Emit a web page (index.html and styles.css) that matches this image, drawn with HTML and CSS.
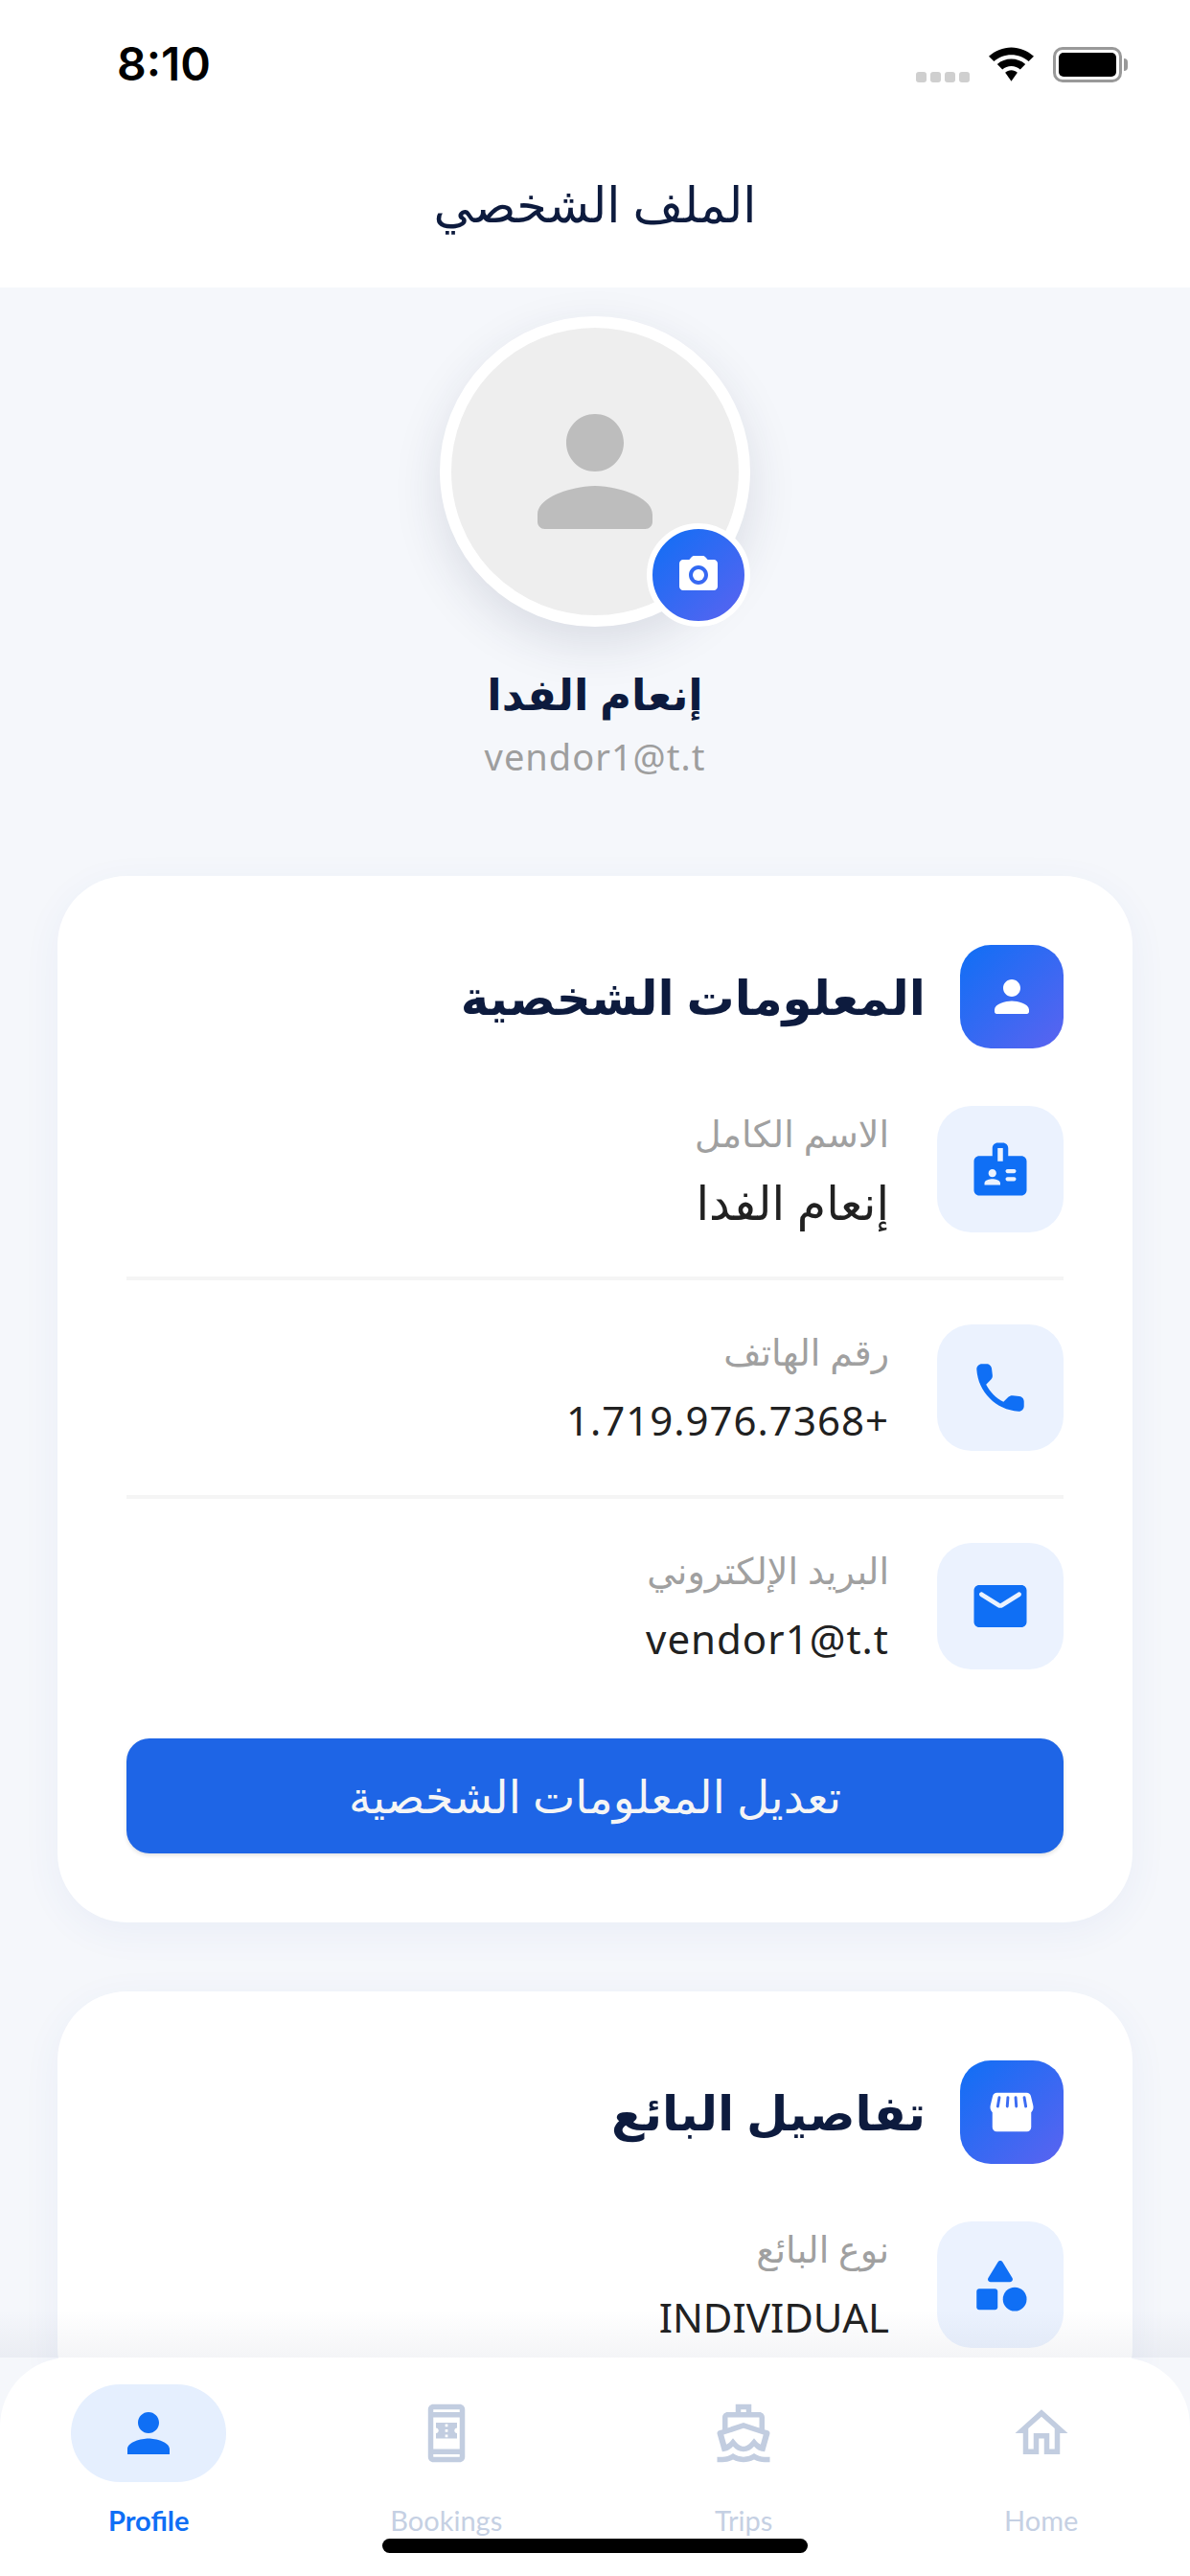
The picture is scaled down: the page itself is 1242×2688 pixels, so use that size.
FILE: index.html
```html
<!DOCTYPE html>
<html lang="ar" dir="rtl">
<head>
    <meta charset="UTF-8">
    <meta name="viewport" content="width=device-width, initial-scale=1.0">
    <title>الملف الشخصي</title>
    <link rel="stylesheet" href="styles.css">
</head>
<body>
<div class="screen">
    <!-- status bar -->
    <div class="status-bar" dir="ltr">
        <span class="clock">8:10</span>
        <div class="status-icons">
            <div class="signal"><i></i><i></i><i></i><i></i></div>
            <svg class="wifi" viewBox="0 0 48 36"><path d="M24 0C15 0 7 3.500 0 9.500L5.500 15C10.500 10.500 17 8 24 8s13.500 2.500 18.500 7L48 9.500C41 3.500 33 0 24 0z"/><path d="M24 12.500c-5.500 0-11 2-15 5.500l5.500 5.500c2.600-2.200 5.900-3.500 9.500-3.500s6.900 1.300 9.500 3.500L39 18c-4-3.500-9.500-5.500-15-5.500z"/><path d="M24 24.500c-2.500 0-4.800 .9-6.500 2.500L24 36l6.500-9c-1.700-1.600-4-2.500-6.500-2.500z"/></svg>
            <div class="battery"><div class="battery-fill"></div></div>
        </div>
    </div>

    <header class="top-bar">الملف الشخصي</header>

    <main class="content">
        <section class="profile">
            <div class="avatar">
                <svg class="avatar-person" viewBox="0 0 24 24"><path d="M12 12c2.210 0 4-1.790 4-4s-1.790-4-4-4-4 1.790-4 4 1.790 4 4 4zm0 2c-2.670 0-8 1.340-8 4v1c0 .55.45 1 1 1h14c.55 0 1-.45 1-1v-1c0-2.660-5.330-4-8-4z"/></svg>
                <div class="avatar-camera">
                    <svg viewBox="0 0 24 24"><circle cx="12" cy="12" r="3"/><path d="M20 4h-3.170l-1.240-1.350c-.37-.41-.91-.65-1.470-.65H9.880c-.56 0-1.100.24-1.480.65L7.170 4H4c-1.100 0-2 .9-2 2v12c0 1.100.9 2 2 2h16c1.100 0 2-.9 2-2V6c0-1.100-.9-2-2-2zm-8 13c-2.760 0-5-2.240-5-5s2.240-5 5-5 5 2.240 5 5-2.240 5-5 5z"/></svg>
                </div>
            </div>
            <h2 class="profile-name">إنعام الفدا</h2>
            <div class="profile-mail">vendor1@t.t</div>
        </section>

        <section class="card">
            <div class="card-head">
                <div class="badge">
                    <svg viewBox="0 0 24 24"><path d="M12 12c2.210 0 4-1.790 4-4s-1.790-4-4-4-4 1.790-4 4 1.790 4 4 4zm0 2c-2.670 0-8 1.340-8 4v1c0 .55.45 1 1 1h14c.55 0 1-.45 1-1v-1c0-2.660-5.330-4-8-4z"/></svg>
                </div>
                <h3 class="card-title">المعلومات الشخصية</h3>
            </div>
            <div class="row row-line">
                <div class="tile">
                    <svg viewBox="0 0 24 24"><path d="M20 7h-5V4c0-1.100-.9-2-2-2h-2c-1.100 0-2 .9-2 2v3H4c-1.100 0-2 .9-2 2v11c0 1.100.9 2 2 2h16c1.100 0 2-.9 2-2V9c0-1.100-.9-2-2-2zM9 12c.83 0 1.500.67 1.500 1.500S9.830 15 9 15s-1.500-.67-1.500-1.500S8.170 12 9 12zm3 6H6v-.75c0-1 2-1.500 3-1.500s3 .5 3 1.500V18zm1-9h-2V4h2v5zm4.250 7.500h-2.500c-.41 0-.75-.34-.75-.75s.34-.75.75-.75h2.500c.41 0 .75.34.75.75s-.34.75-.75.75zm0-3h-2.500c-.41 0-.75-.34-.75-.75s.34-.75.75-.75h2.500c.41 0 .75.34.75.75s-.34.75-.75.75z"/></svg>
                </div>
                <div class="row-text">
                    <div class="row-label">الاسم الكامل</div>
                    <div class="row-value row-value-ar">إنعام الفدا</div>
                </div>
            </div>
            <div class="row row-line">
                <div class="tile">
                    <svg viewBox="0 0 24 24"><path d="M19.230 15.260l-2.540-.29c-.61-.07-1.210.14-1.640.57l-1.840 1.840c-2.830-1.440-5.150-3.750-6.590-6.590l1.850-1.850c.43-.43.64-1.030.57-1.640l-.29-2.520c-.12-1.010-.97-1.770-1.990-1.770H5.030c-1.130 0-2.070.94-2 2.070.53 8.540 7.360 15.360 15.890 15.890 1.130.07 2.070-.87 2.070-2v-1.730c.01-1.010-.75-1.860-1.760-1.980z"/></svg>
                </div>
                <div class="row-text">
                    <div class="row-label">رقم الهاتف</div>
                    <div class="row-value">+1.719.976.7368</div>
                </div>
            </div>
            <div class="row">
                <div class="tile">
                    <svg viewBox="0 0 24 24"><path d="M20 4H4c-1.100 0-1.990.9-1.990 2L2 18c0 1.100.9 2 2 2h16c1.100 0 2-.9 2-2V6c0-1.100-.9-2-2-2zm-.4 4.250l-6.540 4.090c-.65.41-1.470.41-2.120 0L4.400 8.250c-.25-.16-.4-.43-.4-.72 0-.67.73-1.070 1.300-.72L12 11l6.700-4.190c.57-.35 1.300.05 1.300.72 0 .29-.15.56-.4.72z"/></svg>
                </div>
                <div class="row-text">
                    <div class="row-label">البريد الإلكتروني</div>
                    <div class="row-value"><bdi>vendor1@t.t</bdi></div>
                </div>
            </div>
            <button class="edit-btn">تعديل المعلومات الشخصية</button>
        </section>

        <section class="card">
            <div class="card-head">
                <div class="badge">
                    <svg viewBox="0 0 24 24"><path d="M5.050 3h13.890c.91 0 1.690.62 1.910 1.520l1.050 4.370c.25 1.020.02 2.070-.62 2.890-.08.1-.19.19-.28.28V19c0 1.100-.9 2-2 2H5c-1.100 0-2-.9-2-2v-6.940c-.09-.1-.2-.18-.28-.29-.64-.82-.86-1.860-.62-2.880l1.050-4.370C3.360 3.630 4.150 3 5.050 3z"/><path class="shop-stripes" d="M6.200 5.200L5.500 9.300M10.200 5.200L9.900 9.300M13.800 5.200l.3 4.100M17.800 5.200l.7 4.100"/></svg>
                </div>
                <h3 class="card-title">تفاصيل البائع</h3>
            </div>
            <div class="row">
                <div class="tile">
                    <svg viewBox="0 0 24 24"><path d="M11.150 3.400L7.430 9.480c-.41.66.07 1.520.85 1.520h7.430c.78 0 1.260-.86.85-1.520l-3.710-6.080c-.39-.64-1.310-.64-1.700 0z"/><circle cx="17.500" cy="17.500" r="4.500"/><path d="M4 21.500h6c.55 0 1-.45 1-1v-6c0-.55-.45-1-1-1H4c-.55 0-1 .45-1 1v6c0 .55.45 1 1 1z"/></svg>
                </div>
                <div class="row-text">
                    <div class="row-label">نوع البائع</div>
                    <div class="row-value row-value-caps">INDIVIDUAL</div>
                </div>
            </div>
        </section>
    </main>

    <div class="tab-fade"></div>

    <!-- tabs read left to right even on the arabic page -->
    <nav class="tab-bar" dir="ltr">
        <div class="tab tab-active">
            <div class="tab-pill">
                <svg viewBox="0 0 24 24"><path d="M12 12c2.210 0 4-1.790 4-4s-1.790-4-4-4-4 1.790-4 4 1.790 4 4 4zm0 2c-2.670 0-8 1.340-8 4v2h16v-2c0-2.660-5.330-4-8-4z"/></svg>
            </div>
            <span class="tab-label">Profile</span>
        </div>
        <div class="tab">
            <div class="tab-pill">
                <svg viewBox="0 0 24 24"><path d="M17 1.010L7 1c-1.100 0-1.990.9-1.990 2v18c0 1.100.89 2 1.990 2h10c1.100 0 2-.9 2-2V3c0-1.100-.9-1.990-2-1.990zM17 21H7v-1h10v1zm0-3H7V6h10v12zM7 4V3h10v1H7zm9 6V8H8v2c.55 0 1 .45 1 1s-.45 1-1 1v2h8v-2c-.55 0-1-.45-1-1s.45-1 1-1zm-3.500 3.500h-1v-1h1v1zm0-2h-1v-1h1v1zm0-2h-1v-1h1v1z"/></svg>
            </div>
            <span class="tab-label">Bookings</span>
        </div>
        <div class="tab">
            <div class="tab-pill">
                <svg viewBox="0 0 24 24"><path fill-rule="evenodd" d="M20 21c-1.390 0-2.780-.47-4-1.320-2.440 1.710-5.560 1.710-8 0C6.780 20.530 5.390 21 4 21H2v2h2c1.380 0 2.740-.35 4-.99 2.520 1.290 5.480 1.290 8 0 1.260.65 2.620.99 4 .99h2v-2h-2zM3.950 19H4c1.600 0 3.020-.88 4-2 .98 1.120 2.400 2 4 2s3.020-.88 4-2c.98 1.120 2.400 2 4 2h.05l1.890-6.680c.08-.26.06-.54-.06-.78s-.34-.42-.6-.5L20 10.620V6c0-1.100-.9-2-2-2h-3V1H9v3H6c-1.100 0-2 .9-2 2v4.620l-1.290.42c-.26.08-.48.26-.6.5s-.15.52-.06.78L3.950 19zM11 3h2v1h-2zM6 6h12v3.970L12 8l-6 1.970zM12 10.110l7.530 2.470-1.030 3.720c-.6-.3-1.200-.8-1.600-1.300L16 13.900l-.9 1.100c-.8 1-1.900 2-3.100 2s-2.300-1-3.100-2L8 13.900 7.100 15c-.4.5-1 1-1.600 1.300L4.470 12.580z"/></svg>
            </div>
            <span class="tab-label">Trips</span>
        </div>
        <div class="tab">
            <div class="tab-pill">
                <svg viewBox="0 0 24 24"><path d="M12 5.690l5 4.500V18h-2v-6H9v6H7v-7.810l5-4.500M12 3L2 12h3v8h6v-6h2v6h6v-8h3L12 3z"/></svg>
            </div>
            <span class="tab-label">Home</span>
        </div>
        <div class="home-bar"></div>
    </nav>
</div>
</body>
</html>
```

FILE: styles.css
```css
* {
    box-sizing: border-box;
}
html, body {
    margin: 0;
    padding: 0;
}
body {
    font-family: "Noto Sans", "DejaVu Sans", sans-serif;
    background-color: #f5f7fb;
}
.screen {
    position: relative;
    width: 1242px;
    height: 2688px;
    overflow: hidden;
    background-color: #f5f7fb;
}

/* status bar */
.status-bar {
    height: 130px;
    background-color: #fff;
    display: flex;
    justify-content: space-between;
    padding: 42px 71px 0 122px;
}
.clock {
    font-family: "Inter", "Liberation Sans", sans-serif;
    font-size: 48px;
    line-height: 50px;
    font-weight: 600;
    color: #000;
}
.status-icons {
    display: flex;
    align-items: flex-start;
}
.signal {
    display: flex;
    gap: 4px;
    margin-top: 33px;
    margin-right: 20px;
}
.signal i {
    display: block;
    width: 11px;
    height: 11px;
    border-radius: 3px;
    background-color: #cfcfcf;
}
.wifi {
    width: 47px;
    height: 36px;
    margin-top: 7px;
    margin-right: 20px;
    fill: #000;
}
.battery {
    position: relative;
    width: 72px;
    height: 37px;
    margin-top: 7px;
    border: 3px solid #999;
    border-radius: 10px;
    padding: 3px;
}
.battery::after {
    content: "";
    position: absolute;
    right: -9px;
    top: 9px;
    width: 4px;
    height: 13px;
    background-color: #999;
    border-radius: 0 4px 4px 0;
}
.battery-fill {
    height: 100%;
    background-color: #000;
    border-radius: 5px;
}

.top-bar {
    height: 170px;
    background-color: #fff;
    text-align: center;
    font-size: 51px;
    line-height: 164px;
    color: #0d1b3e;
}

.content {
    padding: 30px 60px 0;
}

/* avatar block */
.profile {
    display: flex;
    flex-direction: column;
    align-items: center;
}
.avatar {
    position: relative;
    width: 324px;
    height: 324px;
    border-radius: 50%;
    background-color: #eee;
    border: 12px solid #fff;
    display: flex;
    align-items: center;
    justify-content: center;
    box-shadow: 0 18px 50px rgba(40, 50, 80, 0.13);
}
.avatar-person {
    width: 180px;
    height: 180px;
    fill: #bdbdbd;
}
.avatar-camera {
    position: absolute;
    right: -12px;
    bottom: -12px;
    width: 108px;
    height: 108px;
    border-radius: 50%;
    border: 6px solid #fff;
    background: linear-gradient(135deg, #0f6ff5, #5b63f0);
    display: flex;
    align-items: center;
    justify-content: center;
}
.avatar-camera svg {
    width: 48px;
    height: 48px;
    fill: #fff;
}
.profile-name {
    margin: 40px 0 0;
    font-size: 45px;
    line-height: 60px;
    font-weight: 700;
    color: #0d1b3e;
}
.profile-mail {
    margin-top: 10px;
    font-size: 38px;
    line-height: 50px;
    color: #9e9e9e;
    letter-spacing: 1px;
}

/* cards */
.card {
    background-color: #fff;
    border-radius: 72px;
    padding: 72px;
    margin-top: 100px;
    box-shadow: 0 10px 40px rgba(50, 80, 190, 0.06);
}
.card + .card {
    margin-top: 72px;
}
.card-head {
    display: flex;
    align-items: center;
    gap: 36px;
    margin-bottom: 60px;
}
.badge {
    width: 108px;
    height: 108px;
    border-radius: 32px;
    background: linear-gradient(135deg, #0f6ff5, #5b63f0);
    display: flex;
    align-items: center;
    justify-content: center;
}
.badge svg {
    width: 54px;
    height: 54px;
    fill: #fff;
}
.shop-stripes {
    fill: none;
    stroke: #3c6cf3;
    stroke-width: 1.300;
    stroke-linecap: round;
}
.card-title {
    margin: 0;
    font-size: 50px;
    line-height: 70px;
    font-weight: 700;
    color: #0d1b3e;
}
.row {
    display: flex;
    align-items: center;
    gap: 50px;
}
.row-line {
    padding-bottom: 46px;
    border-bottom: 4px solid #f5f5f5;
    margin-bottom: 46px;
}
.tile {
    width: 132px;
    height: 132px;
    flex: none;
    border-radius: 36px;
    background-color: #ebf2fe;
    display: flex;
    align-items: center;
    justify-content: center;
}
.tile svg {
    width: 66px;
    height: 66px;
    fill: #0f6ff5;
}
.row-label {
    font-size: 38px;
    line-height: 48px;
    color: #a0a0a0;
}
.row-value {
    margin-top: 20px;
    font-size: 42px;
    line-height: 56px;
    color: #212121;
    letter-spacing: 1px;
}
.row-value-ar {
    font-size: 49px;
    letter-spacing: 0;
}
.row-value-caps {
    letter-spacing: 0;
}
.edit-btn {
    display: block;
    width: 100%;
    height: 120px;
    margin-top: 72px;
    border: none;
    border-radius: 24px;
    background-color: #1e65e6;
    color: #f5f5f5;
    font-family: inherit;
    font-size: 47px;
    font-weight: 500;
    box-shadow: 0 2px 4px rgba(0, 0, 0, 0.12);
    cursor: pointer;
}

/* bottom tabs */
.tab-fade {
    position: absolute;
    left: 0;
    right: 0;
    bottom: 228px;
    height: 50px;
    background: linear-gradient(rgba(40, 50, 90, 0), rgba(40, 50, 90, 0.05));
}
.tab-bar {
    position: absolute;
    left: 0;
    right: 0;
    bottom: 0;
    height: 228px;
    background-color: #fff;
    border-radius: 72px 72px 0 0;
    display: grid;
    grid-template-columns: repeat(4, 1fr);
    padding: 28px 0 0;
}
.tab {
    display: flex;
    flex-direction: column;
    align-items: center;
    color: #c5d0e3;
}
.tab-pill {
    width: 162px;
    height: 102px;
    border-radius: 51px;
    display: flex;
    align-items: center;
    justify-content: center;
}
.tab-pill svg {
    width: 66px;
    height: 66px;
    fill: #c2cde0;
}
.tab-label {
    margin-top: 21px;
    font-family: "Lato", "Noto Sans", sans-serif;
    font-size: 29px;
    line-height: 38px;
}
.tab-active {
    color: #0f6ff5;
}
.tab-active .tab-pill {
    background-color: #e5effe;
}
.tab-active .tab-pill svg {
    fill: #0f6ff5;
}
.tab-active .tab-label {
    font-weight: 700;
}
.home-bar {
    position: absolute;
    left: 399px;
    bottom: 24px;
    width: 444px;
    height: 15px;
    border-radius: 8px;
    background-color: #000;
}
```
